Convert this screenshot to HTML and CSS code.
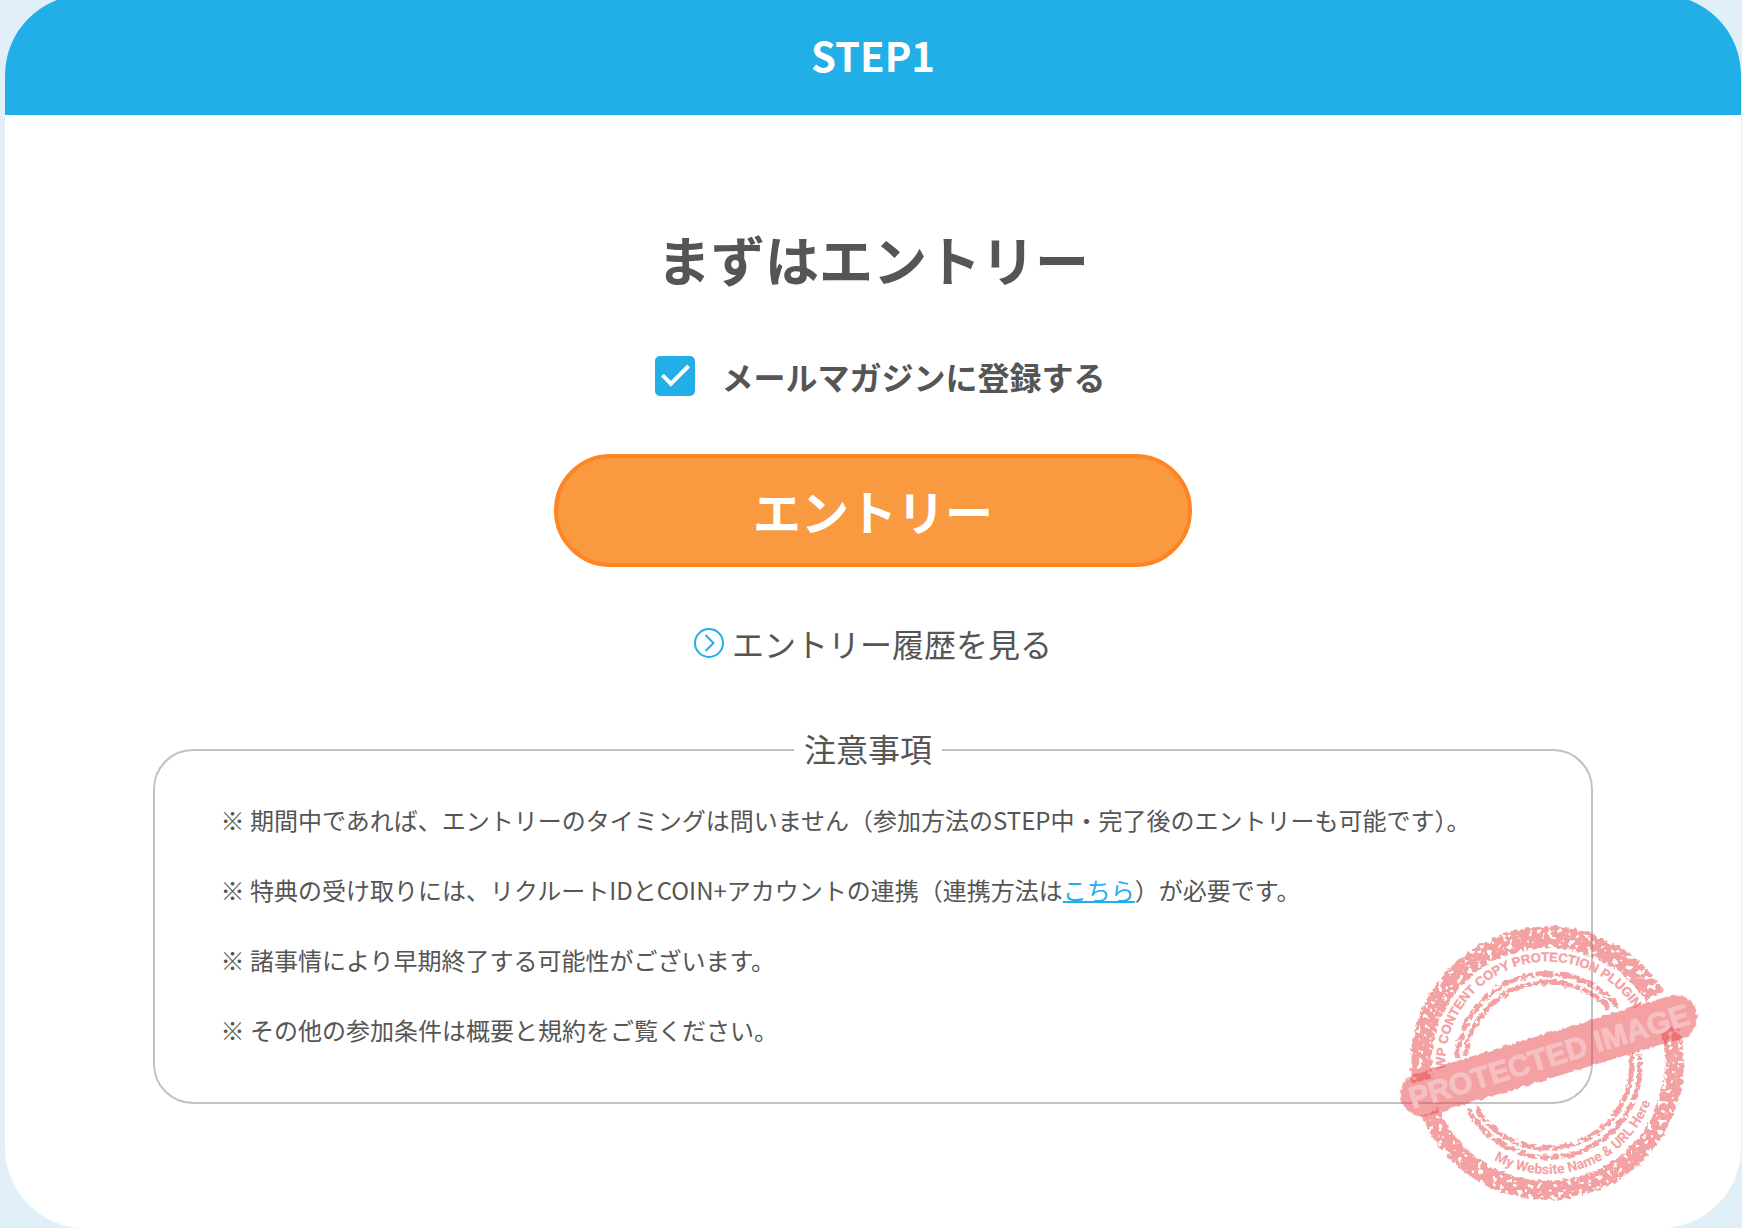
FILE: index.html
```html
<!DOCTYPE html>
<html lang="ja">
<head>
	<meta charset="utf-8">
	<title>まずはエントリー</title>
	<meta name="viewport" content="width=device-width, initial-scale=1">
	<link rel="stylesheet" href="styles.css">
</head>
<body>

<section class="step">
	<h2 class="step-label">STEP1</h2>

	<form class="entry">
		<h3 class="entry-title">まずはエントリー</h3>

		<label class="entry-check">
			<input type="checkbox" name="magazine" checked>
			<span>メールマガジンに登録する</span>
		</label>

		<button type="button" class="btn">エントリー</button>

		<a href="#" class="history">
			<svg class="history-icon" viewBox="0 0 30 30" aria-hidden="true">
				<circle cx="15" cy="15" r="14"/>
				<path d="M11.5 7l8 8-8 8"/>
			</svg>
			<span>エントリー履歴を見る</span>
		</a>

		<fieldset class="notes">
			<legend>注意事項</legend>
			<ul>
				<li>※ 期間中であれば、エントリーのタイミングは問いません（参加方法のSTEP中・完了後のエントリーも可能です）。</li>
				<li>※ 特典の受け取りには、リクルートIDとCOIN+アカウントの連携（連携方法は<a href="#">こちら</a>）が必要です。</li>
				<li>※ 諸事情により早期終了する可能性がございます。</li>
				<li>※ その他の参加条件は概要と規約をご覧ください。</li>
			</ul>
		</fieldset>
	</form>

	<svg class="stamp" viewBox="-158 -155 320 300" role="img" aria-label="PROTECTED IMAGE">
		<defs>
			<!-- worn ink: ragged edge + holes -->
			<filter id="ink" filterUnits="userSpaceOnUse" x="-158" y="-155" width="320" height="300" color-interpolation-filters="sRGB">
				<feTurbulence type="fractalNoise" baseFrequency=".2" numOctaves="2" seed="4" result="noise"/>
				<feDisplacementMap in="SourceGraphic" in2="noise" scale="6" xChannelSelector="R" yChannelSelector="G" result="edge"/>
				<feColorMatrix in="noise" type="matrix" values="0 0 0 0 0  0 0 0 0 0  0 0 0 0 0  0 0 -14 0 9.4" result="holes"/>
				<feComposite in="edge" in2="holes" operator="in"/>
			</filter>
			<filter id="edge" filterUnits="userSpaceOnUse" x="-170" y="-60" width="340" height="120" color-interpolation-filters="sRGB">
				<feTurbulence type="fractalNoise" baseFrequency=".2" numOctaves="2" seed="9" result="noise"/>
				<feDisplacementMap in="SourceGraphic" in2="noise" scale="5" xChannelSelector="R" yChannelSelector="G"/>
			</filter>
			<path id="arc-top" d="M-102.9 4A103 103 0 1 1 102.9 4"/>
			<path id="arc-bottom" d="M-54 94.7A109 109 0 0 0 109 0"/>
		</defs>
		<g class="stamp-ring" filter="url(#ink)">
			<path stroke-width="21" d="M-126 16A127 127 0 0 1 107 -69"/>
			<path stroke-width="19" d="M121 -38A127 127 0 0 1 -118 47"/>
			<path stroke-width="5" d="M-91 -8A91 91 0 0 1 71 -57M91 -11A91 91 0 0 1 -80 43"/>
			<path stroke-width="5" d="M-83 -10A84 84 0 0 1 62 -56M83 -11A84 84 0 0 1 -72 43"/>
		</g>
		<text class="stamp-top"><textPath href="#arc-top">WP CONTENT COPY PROTECTION PLUGIN</textPath></text>
		<text class="stamp-bottom"><textPath href="#arc-bottom">My Website Name &amp; URL Here</textPath></text>
		<g transform="translate(0 -9) rotate(-17)">
			<rect class="stamp-band" x="-153" y="-22" width="308" height="44" rx="21" filter="url(#edge)"/>
			<text class="stamp-title" x="1" y="11">PROTECTED IMAGE</text>
		</g>
	</svg>
</section>

</body>
</html>
```

FILE: styles.css
```css
* {
	box-sizing: border-box;
}
body {
	margin: 0;
	color: #555;
	font-family: "Noto Sans CJK JP", sans-serif;
	font-size: 24px;
	line-height: 36px;
	background: #e0eff8;
}
.step {
	position: relative;
	margin: -5px 1px 0 5px;
	background: #fff;
	border-radius: 80px;
	overflow: hidden;
}
.step-label {
	margin: 0;
	padding: 30px 0;
	color: #fff;
	font-size: 40px;
	line-height: 60px;
	text-align: center;
	background: #22aee6;
}
.entry {
	display: flex;
	flex-direction: column;
	align-items: center;
	padding: 104px 0 124px;
}
.entry-title {
	margin: 0;
	font-size: 54px;
	line-height: 80px;
}
.entry-check {
	display: flex;
	align-items: center;
	gap: 26px;
	margin-top: 57px;
	padding-left: 15px;
	font-size: 32px;
	font-weight: bold;
	line-height: 40px;
	cursor: pointer;
}
.entry-check input {
	position: relative;
	margin: 0;
	width: 40px;
	height: 40px;
	background: #fff;
	border: 2px solid #22aee6;
	border-radius: 5px;
	appearance: none;
}
.entry-check input:checked {
	background: #22aee6;
}
.entry-check input:checked::after {
	content: "";
	position: absolute;
	top: 7px;
	left: 5px;
	box-sizing: border-box;
	width: 27px;
	height: 14px;
	border: solid #fff;
	border-width: 0 0 4px 4px;
	transform: rotate(-45deg);
}
.btn {
	margin-top: 58px;
	padding: 0 0 2px;
	width: 638px;
	max-width: 90%;
	height: 113px;
	color: #fff;
	font-family: inherit;
	font-size: 48px;
	font-weight: bold;
	line-height: 72px;
	background: #f99a40;
	border: 4px solid #ff8522;
	border-radius: 57px;
	cursor: pointer;
}
.history {
	display: flex;
	align-items: center;
	gap: 8px;
	margin-top: 52px;
	color: #555;
	font-size: 32px;
	line-height: 48px;
	text-decoration: none;
}
.history-icon {
	width: 30px;
	height: 30px;
	fill: none;
	stroke: #22aee6;
	stroke-width: 2;
}
.notes {
	margin: 57px 0 0;
	padding: 26px 76px 54px 66px;
	width: 83%;
	border: 2px solid #c1c1c1;
	border-radius: 40px;
}
.notes legend {
	margin: 0 auto;
	padding: 0 10px 4px;
	font-size: 32px;
	line-height: 48px;
}
.notes ul {
	display: grid;
	gap: 34px;
	margin: 0;
	padding: 0;
	list-style: none;
}
.notes a {
	color: #22aee6;
	text-decoration-thickness: 2px;
}

/* stamp */
.stamp {
	position: absolute;
	right: 31px;
	bottom: 18px;
	width: 320px;
	height: 300px;
	pointer-events: none;
}
.stamp-ring {
	fill: none;
	stroke: #e84548;
	opacity: .5;
}
.stamp-band {
	fill: #e84548;
	opacity: .5;
}
.stamp text {
	fill: #f3a2a4;
	font-family: "Liberation Sans", Arial, sans-serif;
	font-weight: bold;
}
.stamp .stamp-top {
	font-size: 13px;
	stroke: #f3a2a4;
	stroke-width: .4px;
}
.stamp .stamp-bottom {
	font-family: "Liberation Sans Narrow", Roboto, sans-serif;
	font-size: 14px;
}
.stamp .stamp-title {
	fill: #f6c0c2;
	stroke: #f6c0c2;
	stroke-width: 1px;
	font-size: 30px;
	text-anchor: middle;
}
```
